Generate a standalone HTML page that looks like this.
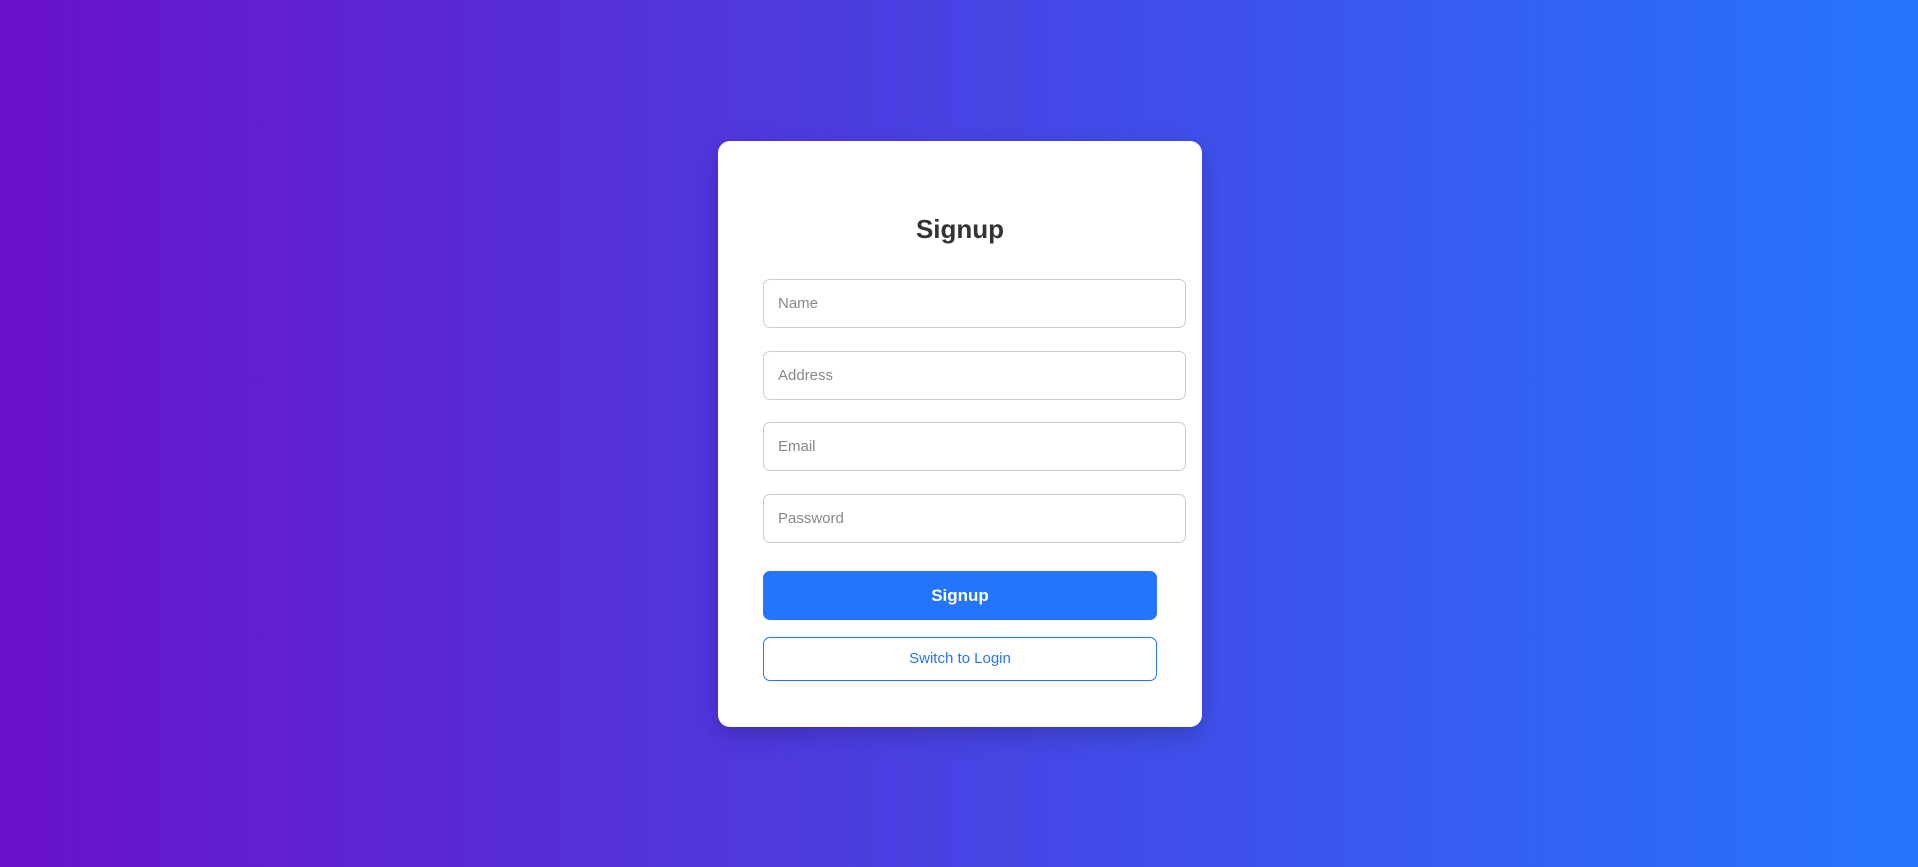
<!DOCTYPE html>
<html><head><style>
html,body{margin:0;height:867px;width:1918px;overflow:hidden}
body{background:linear-gradient(90deg,#6a11cb,#2575fc);font-family:"Liberation Sans",sans-serif;position:relative}
.card{position:absolute;left:718px;top:141px;width:484px;height:586px;background:#fff;border-radius:12px;box-shadow:0 8px 24px rgba(0,0,0,.2)}
h2{position:absolute;left:0;right:0;margin:0;text-align:center;font-size:26px;font-weight:bold;color:#333;line-height:32px;top:72px}
.in{position:absolute;left:45px;height:47px;border:1px solid #ccc;border-radius:7px;box-sizing:content-box;font-size:15px;color:#888;line-height:47px;padding-left:14px;width:407px}
.btn{position:absolute;left:45px;width:394px;height:49px;top:430px;background:#2575fc;border-radius:7px;color:#fff;font-weight:bold;font-size:17px;text-align:center;line-height:49px}
.btn2{position:absolute;left:45px;width:392px;height:42px;top:496px;border:1px solid #2575fc;border-radius:7px;color:#2575fc;font-size:15px;text-align:center;line-height:42px}
</style></head><body>
<div class="card">
<h2>Signup</h2>
<div class="in" style="top:138px">Name</div>
<div class="in" style="top:210px">Address</div>
<div class="in" style="top:281px">Email</div>
<div class="in" style="top:353px">Password</div>
<div class="btn">Signup</div>
<div class="btn2">Switch to Login</div>
</div>
</body></html>
